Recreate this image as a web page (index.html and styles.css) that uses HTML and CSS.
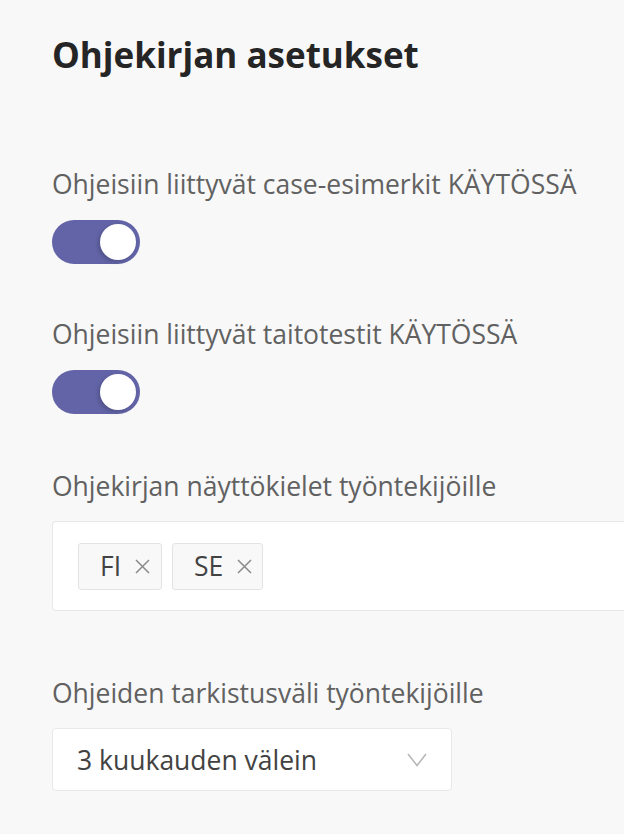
FILE: index.html
```html
<!DOCTYPE html>
<html lang="fi">
<head>
<meta charset="utf-8">
<link rel="stylesheet" href="styles.css">
</head>
<body>
<main class="panel">
  <h1 class="title">Ohjekirjan asetukset</h1>

  <section class="field field-1">
    <div class="label">Ohjeisiin liittyvät case-esimerkit KÄYTÖSSÄ</div>
    <div class="toggle on"><span class="knob"></span></div>
  </section>

  <section class="field field-2">
    <div class="label">Ohjeisiin liittyvät taitotestit KÄYTÖSSÄ</div>
    <div class="toggle on"><span class="knob"></span></div>
  </section>

  <section class="field field-3">
    <div class="label">Ohjekirjan näyttökielet työntekijöille</div>
    <div class="tagbox">
      <span class="chip chip-fi">FI<svg class="chip-x" width="15" height="15" viewBox="0 0 15 15"><path d="M1 1 L14 14 M14 1 L1 14" stroke="#8a8a8a" stroke-width="1.5" fill="none"/></svg></span>
      <span class="chip chip-se">SE<svg class="chip-x" width="15" height="15" viewBox="0 0 15 15"><path d="M1 1 L14 14 M14 1 L1 14" stroke="#8a8a8a" stroke-width="1.5" fill="none"/></svg></span>
    </div>
  </section>

  <section class="field field-4">
    <div class="label">Ohjeiden tarkistusväli työntekijöille</div>
    <div class="select">
      <span class="select-value">3 kuukauden välein</span>
      <svg class="chev" width="20" height="14" viewBox="0 0 20 14"><path d="M1 1 L10 12.5 L19 1" fill="none" stroke="#b5b5b5" stroke-width="1.5"/></svg>
    </div>
  </section>
</main>
</body>
</html>
```

FILE: styles.css
```css
html, body {
  margin: 0;
  padding: 0;
  background: #f8f8f8;
}
body {
  font-family: "Open Sans", "Noto Sans", sans-serif;
  color: #616161;
  overflow: hidden;
}
.panel {
  padding: 33px 0 0 52px;
}
.title {
  margin: 0;
  font-size: 35px;
  line-height: 44px;
  font-weight: 700;
  color: #252525;
}
.field-1 { margin-top: 91px; }
.field-2 { margin-top: 54px; }
.field-3 { margin-top: 56px; }
.field-4 { margin-top: 66px; }
.label {
  font-size: 26.5px;
  line-height: 32px;
  color: #616161;
  white-space: nowrap;
}
.toggle {
  margin-top: 20px;
  width: 88px;
  height: 44px;
  border-radius: 22px;
  background: #6264a7;
  display: flex;
  align-items: center;
  justify-content: flex-end;
  padding: 0 4px;
  box-sizing: border-box;
}
.knob {
  width: 36px;
  height: 36px;
  border-radius: 50%;
  background: #fff;
  box-shadow: -2px 2px 4px rgba(0,0,0,0.18);
}
.tagbox {
  margin-top: 19px;
  height: 90px;
  box-sizing: border-box;
  border: 1px solid #e8e8e8;
  border-right: none;
  border-radius: 4px 0 0 4px;
  background: #fff;
  display: flex;
  align-items: center;
  gap: 10px;
  padding-left: 25px;
}
.chip {
  display: inline-flex;
  align-items: center;
  height: 47px;
  box-sizing: border-box;
  border: 1.5px solid #e3e3e3;
  border-radius: 3px;
  background: #f8f8f8;
  padding: 0 0 0 21px;
  font-size: 26.5px;
  color: #424242;
}
.chip-fi { width: 84px; }
.chip-se { width: 91px; }
.chip-x {
  margin-left: 14px;
  display: block;
}
.select {
  margin-top: 19px;
  width: 400px;
  height: 63px;
  box-sizing: border-box;
  border: 1px solid #e8e8e8;
  border-radius: 4px;
  background: #fff;
  display: flex;
  align-items: center;
  justify-content: space-between;
  padding: 0 24px 0 24px;
}
.select-value {
  font-size: 26.5px;
  color: #424242;
}
.chev {
  display: block;
}
```
